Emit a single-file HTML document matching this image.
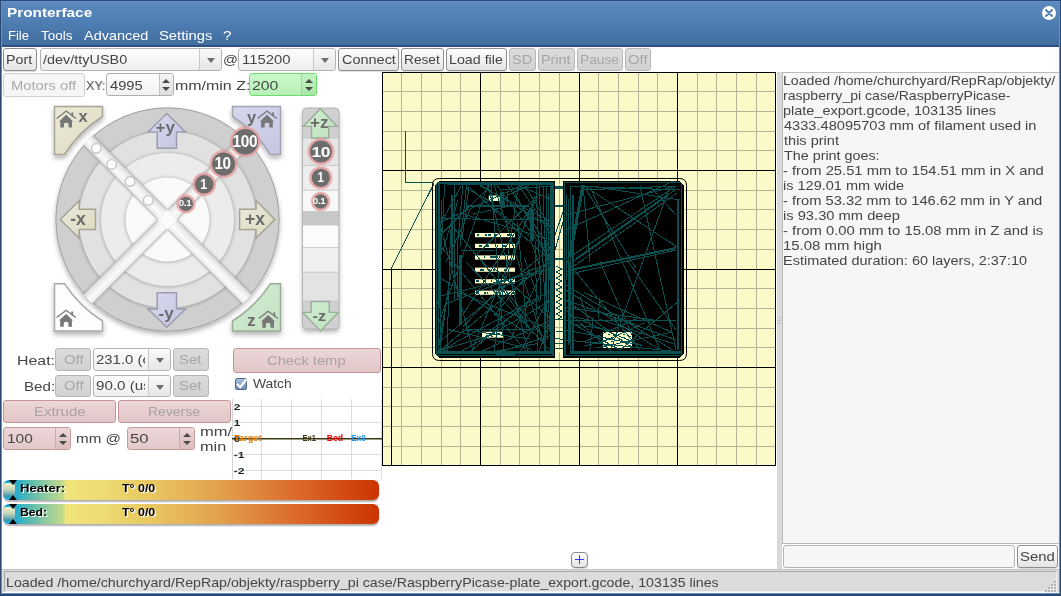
<!DOCTYPE html><html><head><meta charset="utf-8"><style>*{margin:0;padding:0;box-sizing:border-box}
html,body{width:1061px;height:596px;overflow:hidden;background:#fff}
body{position:relative;font-family:"Liberation Sans",sans-serif;font-size:13px;color:#454545;letter-spacing:0}
.a{position:absolute}
.t{position:absolute;white-space:nowrap;line-height:15px;will-change:transform}
svg{will-change:transform}
.frame{left:0;top:0;width:1061px;height:596px;background:#2b4a73}
.frame2{left:1px;top:1px;width:1059px;height:593px;background:#5f90cc}
.title{left:2px;top:2px;width:1057px;height:45px;background:linear-gradient(#5b89be 0px,#5282b6 14px,#4a78ac 28px,#416d9f 43px,#2e5182 43px,#2e5182 45px)}
.content{left:2px;top:47px;width:1057px;height:546px;background:#fff}
.btn{position:absolute;border:1px solid #8e8e8e;border-radius:3px;background:linear-gradient(#fefefe,#e4e4e4);box-shadow:0 1px 0 rgba(0,0,0,.12);text-align:center;white-space:nowrap;color:#3a3a3a}
.dis{border-color:#b6b6b6;background:linear-gradient(#dcdcdc,#d2d2d2);color:#a4a4a4;box-shadow:none}
.pink{border-color:#c49496;background:linear-gradient(#ecd6d7,#e2c6c7);color:#a9a0a0;box-shadow:none}
.combo{position:absolute;border:1px solid #b4b4b4;border-radius:3px;background:linear-gradient(#fdfdfd,#eeeeee);white-space:nowrap;overflow:hidden;color:#3a3a3a}
.combo .dv{position:absolute;top:0;bottom:0;border-left:1px solid #c8c8c8;background:linear-gradient(#fafafa,#e6e6e6)}
.arr{position:absolute;width:0;height:0;border-left:4px solid transparent;border-right:4px solid transparent;border-top:5.5px solid #6c6c6c}
.spin{position:absolute;border:1px solid #b0b0b0;border-radius:3px;background:linear-gradient(#fdfdfd,#f2f2f2);white-space:nowrap;overflow:hidden;color:#3a3a3a}
.spin .dv{position:absolute;top:0;bottom:0;right:0;border-left:1px solid #c4c4c4;background:linear-gradient(#f4f4f4,#dedede)}
.up{position:absolute;width:0;height:0;border-left:4px solid transparent;border-right:4px solid transparent;border-bottom:4.5px solid #4a4a4a}
.dn{position:absolute;width:0;height:0;border-left:4px solid transparent;border-right:4px solid transparent;border-top:4.5px solid #4a4a4a}
svg text{font-family:"Liberation Sans",sans-serif}
.jl{font-weight:bold;fill:#6b6b6b;letter-spacing:0}
.bd{font-weight:bold;fill:#fff;letter-spacing:-0.3px}
.gl{font-weight:bold;font-size:11px;fill:#1c2b2b;letter-spacing:0}
.gt{font-weight:bold;font-size:10px;letter-spacing:0.3px}
.bar{position:absolute;left:3px;width:376px;height:20px;border-radius:6px;background:linear-gradient(90deg,#16a6dc 0px,#2aaecc 14px,#5cbcae 28px,#8ccaa0 42px,#c4da8a 60px,#f0e47a 63px,#eedb72 100px,#e8c660 150px,#e29e4a 220px,#dc6c2c 290px,#cc3300 376px);box-shadow:0 1.5px 1.5px rgba(0,0,0,.3)}
.bar .k{position:absolute;left:0;top:3px;width:12px;height:14px;border-radius:3px;background:linear-gradient(#f6f2c6,#c4d8bc 45%,#3e8ea6)}
.bar .tt{position:absolute;width:0;height:0;border-left:4px solid transparent;border-right:4px solid transparent}
.bar .lb{position:absolute;top:2px;font-weight:bold;font-size:11px;color:#000;letter-spacing:0.3px;text-shadow:1px 1px 0 #fff;line-height:15px}

.mo{background:#f6f6f6;border-color:#d0d0d0;box-shadow:none}
.green{border-color:#6cdc6c;background:linear-gradient(#c8f8c8,#b8f0b8)}
.green .dv{border-color:#90e090;background:linear-gradient(#c4f4c4,#a8e8a8)}
.pk{border-color:#c79a9b;background:linear-gradient(#ecd6d7,#e3c8c9)}
.pk .dv{border-color:#d0aaab;background:linear-gradient(#ecd8d8,#dcbcbd)}
</style></head><body>
<div class="a frame"></div><div class="a frame2"></div>
<div class="a title"></div>
<div class="t" style="left:7.32px;top:5.00px;font-weight:bold;transform:scaleX(1.1786);transform-origin:0 0;color:#fff;">Pronterface</div>
<div class="t" style="left:8.41px;top:27.80px;transform:scaleX(0.9947);transform-origin:0 0;color:#fff;">File</div>
<div class="t" style="left:41.20px;top:27.80px;transform:scaleX(1.0345);transform-origin:0 0;color:#fff;">Tools</div>
<div class="t" style="left:84.40px;top:27.80px;transform:scaleX(1.1107);transform-origin:0 0;color:#fff;">Advanced</div>
<div class="t" style="left:158.66px;top:27.80px;transform:scaleX(1.1356);transform-origin:0 0;color:#fff;">Settings</div>
<div class="t" style="left:222.62px;top:27.80px;transform:scaleX(1.1800);transform-origin:0 0;color:#fff;">?</div>
<div class="a content"></div>
<div class="a" style="left:1041.5px;top:6px;width:14px;height:14px;border-radius:50%;background:#fff"></div><svg class="a" style="left:1041.5px;top:6px" width="14" height="14"><path d="M4,4 L10,10 M10,4 L4,10" stroke="#4d7cb2" stroke-width="1.8" stroke-linecap="round"/></svg>
<div class="btn" style="left:3px;top:48px;width:34px;height:23px;"></div>
<div class="combo" style="left:40px;top:48px;width:182px;height:23px"><div class="dv" style="left:158px;width:23px"></div><div class="arr" style="left:165.5px;top:9px"></div></div>
<div class="t" style="left:42.90px;top:51.80px;transform:scaleX(1.1093);transform-origin:0 0;">/dev/ttyUSB0</div>
<div class="t" style="left:222.76px;top:51.80px;transform:scaleX(1.1400);transform-origin:0 0;">@</div>
<div class="combo" style="left:238px;top:48px;width:98px;height:23px"><div class="dv" style="left:74px;width:23px"></div><div class="arr" style="left:82px;top:9px"></div></div>
<div class="t" style="left:242.46px;top:51.80px;transform:scaleX(1.1425);transform-origin:0 0;">115200</div>
<div class="t" style="left:6.40px;top:51.80px;transform:scaleX(1.0955);transform-origin:0 0;">Port</div>
<div class="btn" style="left:338px;top:48px;width:61px;height:23px;"></div>
<div class="t" style="left:341.69px;top:51.80px;transform:scaleX(1.1130);transform-origin:0 0;">Connect</div>
<div class="btn" style="left:401px;top:48px;width:43px;height:23px;"></div>
<div class="t" style="left:404.35px;top:51.80px;transform:scaleX(1.0531);transform-origin:0 0;">Reset</div>
<div class="btn" style="left:446px;top:48px;width:61px;height:23px;"></div>
<div class="t" style="left:449.30px;top:51.80px;transform:scaleX(1.0957);transform-origin:0 0;">Load file</div>
<div class="btn dis" style="left:509px;top:48px;width:27px;height:23px;"></div>
<div class="t" style="left:512.49px;top:51.80px;transform:scaleX(1.1125);transform-origin:0 0;color:#a6a6a6;">SD</div>
<div class="btn dis" style="left:538px;top:48px;width:37px;height:23px;"></div>
<div class="t" style="left:541.40px;top:51.80px;transform:scaleX(1.1040);transform-origin:0 0;color:#a6a6a6;">Print</div>
<div class="btn dis" style="left:577px;top:48px;width:46px;height:23px;"></div>
<div class="t" style="left:580.34px;top:51.80px;transform:scaleX(1.0571);transform-origin:0 0;color:#a6a6a6;">Pause</div>
<div class="btn dis" style="left:625px;top:48px;width:26px;height:23px;"></div>
<div class="t" style="left:628.25px;top:51.80px;transform:scaleX(1.1467);transform-origin:0 0;color:#a6a6a6;">Off</div>
<div class="btn mo" style="left:3px;top:73px;width:82px;height:24px;"></div>
<div class="t" style="left:11.27px;top:77.80px;transform:scaleX(1.1321);transform-origin:0 0;color:#a9a9a9;">Motors off</div>
<div class="t" style="left:86.14px;top:77.80px;transform:scaleX(0.9647);transform-origin:0 0;">XY:</div>
<div class="spin" style="left:106px;top:73px;width:68px;height:23px"><div class="dv" style="width:14px"><div class="up" style="left:2px;top:4.5px"></div><div class="dn" style="left:2px;top:13px"></div></div></div>
<div class="t" style="left:110.20px;top:77.80px;transform:scaleX(1.1321);transform-origin:0 0;">4995</div>
<div class="t" style="left:174.57px;top:77.80px;transform:scaleX(1.2276);transform-origin:0 0;">mm/min Z:</div>
<div class="spin green" style="left:249px;top:73px;width:68px;height:23px"><div class="dv" style="width:15px"><div class="up" style="left:3px;top:4.5px"></div><div class="dn" style="left:3px;top:13px"></div></div></div>
<div class="t" style="left:252.18px;top:77.80px;transform:scaleX(1.2158);transform-origin:0 0;">200</div>
<svg class="a" style="left:0;top:0" width="1061" height="596" viewBox="0 0 1061 596"><defs>
<filter id="shc" x="-30%" y="-30%" width="160%" height="160%"><feGaussianBlur in="SourceAlpha" stdDeviation="2.5"/><feOffset dx="0" dy="2.5"/><feComponentTransfer><feFuncA type="linear" slope="0.3"/></feComponentTransfer><feMerge><feMergeNode/><feMergeNode in="SourceGraphic"/></feMerge></filter>
<filter id="bl1" x="-30%" y="-30%" width="160%" height="160%"><feGaussianBlur stdDeviation="1.2"/></filter>
<filter id="bl2" x="-50%" y="-50%" width="200%" height="200%"><feGaussianBlur stdDeviation="4"/></filter>
<radialGradient id="rg2" cx="167.5" cy="219.5" r="88.5" gradientUnits="userSpaceOnUse"><stop offset="0" stop-color="#e2e2e2"/><stop offset="1" stop-color="#e0e0e0"/></radialGradient>
<radialGradient id="rg3" cx="167.5" cy="219.5" r="66.5" gradientUnits="userSpaceOnUse"><stop offset="0" stop-color="#eeeeee"/><stop offset="1" stop-color="#ececec"/></radialGradient>
<radialGradient id="rg4" cx="167.5" cy="219.5" r="42" gradientUnits="userSpaceOnUse"><stop offset="0" stop-color="#fcfcfc"/><stop offset="1" stop-color="#f9f9f9"/></radialGradient>
<linearGradient id="gX" x1="0" y1="0" x2="1" y2="1"><stop offset="0" stop-color="#ecead6"/><stop offset="1" stop-color="#dedbc2"/></linearGradient>
<linearGradient id="gY" x1="0" y1="0" x2="1" y2="1"><stop offset="0" stop-color="#d5d6ec"/><stop offset="1" stop-color="#c6c8e2"/></linearGradient>
<linearGradient id="gZ" x1="0" y1="0" x2="1" y2="1"><stop offset="0" stop-color="#d2ecd2"/><stop offset="1" stop-color="#c4e2c4"/></linearGradient>
<linearGradient id="gXa" x1="0" y1="0" x2="1" y2="1"><stop offset="0" stop-color="#eceada"/><stop offset="1" stop-color="#dcd9c0"/></linearGradient>
<linearGradient id="gYa" x1="0" y1="0" x2="1" y2="1"><stop offset="0" stop-color="#d8d9ef"/><stop offset="1" stop-color="#c4c6e0"/></linearGradient>
<linearGradient id="gZa" x1="0" y1="0" x2="1" y2="1"><stop offset="0" stop-color="#d2eed2"/><stop offset="1" stop-color="#bfe0bf"/></linearGradient>
<linearGradient id="stA" gradientUnits="userSpaceOnUse" x1="172.2" y1="214.8" x2="162.8" y2="224.2"><stop offset="0" stop-color="#d6d6d6"/><stop offset="0.3" stop-color="#ededed"/><stop offset="0.6" stop-color="#fafafa"/><stop offset="0.85" stop-color="#f0f0f0"/><stop offset="1" stop-color="#e2e2e2"/></linearGradient>
<linearGradient id="stB" gradientUnits="userSpaceOnUse" x1="162.8" y1="214.8" x2="172.2" y2="224.2"><stop offset="0" stop-color="#d6d6d6"/><stop offset="0.3" stop-color="#ededed"/><stop offset="0.6" stop-color="#fafafa"/><stop offset="0.85" stop-color="#f0f0f0"/><stop offset="1" stop-color="#e2e2e2"/></linearGradient>
<filter id="bl15" x="-30%" y="-30%" width="160%" height="160%"><feGaussianBlur stdDeviation="1.8"/></filter>
</defs>
<g filter="url(#shc)"><circle cx="167.5" cy="219.5" r="112" fill="#cfcfcf"/></g><circle cx="167.5" cy="219.5" r="111.6" fill="#cfcfcf" stroke="#9a9a9a" stroke-width="0.9"/><circle cx="167.5" cy="219.9" r="89.5" fill="#000" fill-opacity="0.2" filter="url(#bl15)"/><circle cx="167.5" cy="219.5" r="88.5" fill="#e1e1e1"/><circle cx="167.5" cy="219.9" r="67.5" fill="#000" fill-opacity="0.2" filter="url(#bl15)"/><circle cx="167.5" cy="219.5" r="66.5" fill="#ececec"/><circle cx="167.5" cy="219.9" r="43.0" fill="#000" fill-opacity="0.2" filter="url(#bl15)"/><circle cx="167.5" cy="219.5" r="42" fill="#fafafa"/><clipPath id="jc"><circle cx="167.5" cy="219.5" r="112.7"/></clipPath><clipPath id="jc2"><circle cx="167.5" cy="219.5" r="112.1"/></clipPath><g clip-path="url(#jc)"><path d="M80.17,144.19 L242.81,306.83 L254.83,294.81 L92.19,132.17Z" fill="#000" opacity="0.08" filter="url(#bl1)"/><path d="M92.19,306.83 L254.83,144.19 L242.81,132.17 L80.17,294.81Z" fill="#000" opacity="0.08" filter="url(#bl1)"/><path d="M74.41,135.81 L251.19,312.59 L260.59,303.19 L83.81,126.41Z" fill="url(#stA)"/><path d="M83.81,312.59 L260.59,135.81 L251.19,126.41 L74.41,303.19Z" fill="url(#stB)"/></g><path d="M74.41,135.81L251.19,312.59M83.81,126.41L260.59,303.19M83.81,312.59L260.59,135.81M74.41,303.19L251.19,126.41" stroke="#a9a9a9" stroke-width="1" fill="none" clip-path="url(#jc2)"/><path d="M157.4954798102189,219.5 L167.5,209.4954798102189 L177.5045201897811,219.5 L167.5,229.5045201897811Z" fill="#f7f7f7"/><circle cx="167.5" cy="219.5" r="8" fill="#fff" opacity="0.8" filter="url(#bl2)"/><circle cx="96.3" cy="148.3" r="4.8" fill="#fdfdfd" stroke="#c6c6c6" stroke-width="1.4"/><circle cx="111.6" cy="164.4" r="4.8" fill="#fdfdfd" stroke="#c6c6c6" stroke-width="1.4"/><circle cx="130" cy="181.5" r="4.8" fill="#fdfdfd" stroke="#c6c6c6" stroke-width="1.4"/><circle cx="148.2" cy="200.4" r="4.8" fill="#fdfdfd" stroke="#c6c6c6" stroke-width="1.4"/><g filter="url(#shc)"><path d="M54.5,106.5 H102.5 V116.5 A122,122 0 0 0 64.5,154.5 H54.5Z" fill="url(#gX)" stroke="#a6a497" stroke-width="1.5"/><path d="M280.5,106.5 H232.5 V116.5 A122,122 0 0 1 270.5,154.5 H280.5Z" fill="url(#gY)" stroke="#a3a3b3" stroke-width="1.5"/><path d="M54.5,331 H102.5 V321 A122,122 0 0 1 64.5,283.7 H54.5Z" fill="#fdfdfd" stroke="#a8a8a8" stroke-width="1.5"/><path d="M280.5,331 H232.5 V321 A122,122 0 0 0 270.5,283.7 H280.5Z" fill="url(#gZ)" stroke="#9aab98" stroke-width="1.5"/></g><g transform="translate(66.2,111.4)"><path d="M-9.5,7 L0,-0.3 L9.8,7" fill="none" stroke="#777" stroke-width="1.3"/><rect x="5.2" y="1" width="1.8" height="4" fill="#777"/><path d="M-7.2,10 L0,3.4 L7,10 H5.8 V16.2 H2.3 V12.2 Q0,10.4 -2.3,12.2 V16.2 H-5.9 V10Z" fill="#777"/></g><g transform="translate(267,111.4)"><path d="M-9.5,7 L0,-0.3 L9.8,7" fill="none" stroke="#777" stroke-width="1.3"/><rect x="5.2" y="1" width="1.8" height="4" fill="#777"/><path d="M-7.2,10 L0,3.4 L7,10 H5.8 V16.2 H2.3 V12.2 Q0,10.4 -2.3,12.2 V16.2 H-5.9 V10Z" fill="#777"/></g><g transform="translate(66.1,310.5)"><path d="M-9.5,7 L0,-0.3 L9.8,7" fill="none" stroke="#777" stroke-width="1.3"/><rect x="5.2" y="1" width="1.8" height="4" fill="#777"/><path d="M-7.2,10 L0,3.4 L7,10 H5.8 V16.2 H2.3 V12.2 Q0,10.4 -2.3,12.2 V16.2 H-5.9 V10Z" fill="#777"/></g><g transform="translate(268.2,311.5)"><path d="M-9.5,7 L0,-0.3 L9.8,7" fill="none" stroke="#777" stroke-width="1.3"/><rect x="5.2" y="1" width="1.8" height="4" fill="#777"/><path d="M-7.2,10 L0,3.4 L7,10 H5.8 V16.2 H2.3 V12.2 Q0,10.4 -2.3,12.2 V16.2 H-5.9 V10Z" fill="#777"/></g><text x="78.5" y="122.3" class="jl" font-size="16.5">x</text><text x="247" y="122.5" class="jl" font-size="16.5">y</text><text x="247.2" y="325.6" class="jl" font-size="16.5">z</text><path d="M166.7,113.5 L185.5,132 H176.5 V148.3 H157.2 V132 H148Z" fill="url(#gYa)" stroke="#9c9cae" stroke-width="1.5"/><path d="M166.7,327.3 L185.5,309 H176.5 V292.8 H157.2 V309 H148Z" fill="url(#gYa)" stroke="#9c9cae" stroke-width="1.5"/><path d="M60.3,219.5 L79.2,200.5 V209.2 H95.5 V229.5 H79.2 V238.3Z" fill="url(#gXa)" stroke="#a5a394" stroke-width="1.5"/><path d="M274.8,219.5 L256,200.5 V209.2 H239.6 V229.5 H256 V238.3Z" fill="url(#gXa)" stroke="#a5a394" stroke-width="1.5"/><text x="155.5" y="133.3" class="jl" font-size="17">+y</text><text x="158.6" y="318.8" class="jl" font-size="17">-y</text><text x="70.2" y="225" class="jl" font-size="17.5">-x</text><text x="245" y="224.8" class="jl" font-size="17.5">+x</text><path d="M238.20,164.00 L236.88,164.79 L238.10,165.73 L236.69,166.35 L237.79,167.43 L236.32,167.88 L237.29,169.08 L235.77,169.36 L236.59,170.67 L235.05,170.76 L235.71,172.16 L234.17,172.07 L234.66,173.53 L233.14,173.26 L233.45,174.77 L231.98,174.33 L232.11,175.86 L230.70,175.25 L230.65,176.79 L229.32,176.01 L229.09,177.53 L227.86,176.60 L227.45,178.08 L226.34,177.01 L225.76,178.44 L224.78,177.25 L224.03,178.59 L223.21,177.29 L222.30,178.54 L221.64,177.15 L220.59,178.29 L220.09,176.83 L218.92,177.83 L218.60,176.32 L217.32,177.18 L217.18,175.65 L215.81,176.35 L215.85,174.81 L214.40,175.34 L214.62,173.81 L213.12,174.17 L213.53,172.68 L212.00,172.86 L212.57,171.43 L211.03,171.42 L211.77,170.07 L210.24,169.89 L211.13,168.63 L209.64,168.26 L210.67,167.12 L209.23,166.58 L210.39,165.57 L209.03,164.86 L210.30,164.00 L209.03,163.14 L210.39,162.43 L209.23,161.42 L210.67,160.88 L209.64,159.74 L211.13,159.37 L210.24,158.11 L211.77,157.93 L211.03,156.58 L212.57,156.57 L212.00,155.14 L213.53,155.32 L213.12,153.83 L214.62,154.19 L214.40,152.66 L215.85,153.19 L215.81,151.65 L217.18,152.35 L217.32,150.82 L218.60,151.68 L218.92,150.17 L220.09,151.17 L220.59,149.71 L221.64,150.85 L222.30,149.46 L223.21,150.71 L224.03,149.41 L224.78,150.75 L225.76,149.56 L226.34,150.99 L227.45,149.92 L227.86,151.40 L229.09,150.47 L229.32,151.99 L230.65,151.21 L230.70,152.75 L232.11,152.14 L231.98,153.67 L233.45,153.23 L233.14,154.74 L234.66,154.47 L234.17,155.93 L235.71,155.84 L235.05,157.24 L236.59,157.33 L235.77,158.64 L237.29,158.92 L236.32,160.12 L237.79,160.57 L236.69,161.65 L238.10,162.27 L236.88,163.21Z" fill="#e39c9e" fill-opacity="0.85"/><circle cx="223.6" cy="164" r="11.5" fill="#6d6d6d"/><text x="214.4" y="168.8" class="bd" font-size="16.06" textLength="16.40" lengthAdjust="spacingAndGlyphs">10</text><path d="M261.20,141.70 L259.88,142.49 L261.11,143.42 L259.71,144.06 L260.83,145.12 L259.37,145.61 L260.37,146.78 L258.86,147.10 L259.73,148.38 L258.20,148.54 L258.92,149.90 L257.38,149.89 L257.96,151.32 L256.43,151.15 L256.84,152.63 L255.34,152.30 L255.59,153.82 L254.14,153.32 L254.22,154.86 L252.83,154.21 L252.75,155.75 L251.43,154.95 L251.19,156.47 L249.96,155.54 L249.55,157.02 L248.44,155.96 L247.87,157.39 L246.88,156.21 L246.16,157.58 L245.30,156.30 L244.44,157.58 L243.72,156.21 L242.73,157.39 L242.16,155.96 L241.05,157.02 L240.64,155.54 L239.41,156.47 L239.17,154.95 L237.85,155.75 L237.77,154.21 L236.38,154.86 L236.46,153.32 L235.01,153.82 L235.26,152.30 L233.76,152.63 L234.17,151.15 L232.64,151.32 L233.22,149.89 L231.68,149.90 L232.40,148.54 L230.87,148.38 L231.74,147.10 L230.23,146.78 L231.23,145.61 L229.77,145.12 L230.89,144.06 L229.49,143.42 L230.72,142.49 L229.40,141.70 L230.72,140.91 L229.49,139.98 L230.89,139.34 L229.77,138.28 L231.23,137.79 L230.23,136.62 L231.74,136.30 L230.87,135.02 L232.40,134.86 L231.68,133.50 L233.22,133.51 L232.64,132.08 L234.17,132.25 L233.76,130.77 L235.26,131.10 L235.01,129.58 L236.46,130.08 L236.38,128.54 L237.77,129.19 L237.85,127.65 L239.17,128.45 L239.41,126.93 L240.64,127.86 L241.05,126.38 L242.16,127.44 L242.73,126.01 L243.72,127.19 L244.44,125.82 L245.30,127.10 L246.16,125.82 L246.88,127.19 L247.87,126.01 L248.44,127.44 L249.55,126.38 L249.96,127.86 L251.19,126.93 L251.43,128.45 L252.75,127.65 L252.83,129.19 L254.22,128.54 L254.14,130.08 L255.59,129.58 L255.34,131.10 L256.84,130.77 L256.43,132.25 L257.96,132.08 L257.38,133.51 L258.92,133.50 L258.20,134.86 L259.73,135.02 L258.86,136.30 L260.37,136.62 L259.37,137.79 L260.83,138.28 L259.71,139.34 L261.11,139.98 L259.88,140.91Z" fill="#e39c9e" fill-opacity="0.85"/><circle cx="245.3" cy="141.7" r="12.8" fill="#6d6d6d"/><text x="232.4" y="146.5" class="bd" font-size="15.92" textLength="24.80" lengthAdjust="spacingAndGlyphs">100</text><path d="M216.60,184.30 L215.27,185.07 L216.48,186.03 L215.06,186.61 L216.12,187.72 L214.63,188.10 L215.53,189.34 L214.00,189.51 L214.72,190.87 L213.18,190.82 L213.70,192.27 L212.18,192.01 L212.50,193.51 L211.03,193.05 L211.13,194.58 L209.75,193.91 L209.64,195.45 L208.36,194.59 L208.03,196.09 L206.89,195.07 L206.35,196.51 L205.36,195.34 L204.63,196.69 L203.81,195.39 L202.90,196.63 L202.27,195.23 L201.20,196.33 L200.77,194.86 L199.55,195.80 L199.33,194.28 L198.00,195.04 L197.99,193.50 L196.57,194.07 L196.77,192.55 L195.28,192.91 L195.70,191.43 L194.17,191.59 L194.79,190.18 L193.25,190.12 L194.06,188.81 L192.55,188.54 L193.53,187.36 L192.07,186.88 L193.21,185.84 L191.83,185.16 L193.10,184.30 L191.83,183.44 L193.21,182.76 L192.07,181.72 L193.53,181.24 L192.55,180.06 L194.06,179.79 L193.25,178.48 L194.79,178.42 L194.17,177.01 L195.70,177.17 L195.28,175.69 L196.77,176.05 L196.57,174.53 L197.99,175.10 L198.00,173.56 L199.33,174.32 L199.55,172.80 L200.77,173.74 L201.20,172.27 L202.27,173.37 L202.90,171.97 L203.81,173.21 L204.63,171.91 L205.36,173.26 L206.35,172.09 L206.89,173.53 L208.03,172.51 L208.36,174.01 L209.64,173.15 L209.75,174.69 L211.13,174.02 L211.03,175.55 L212.50,175.09 L212.18,176.59 L213.70,176.33 L213.18,177.78 L214.72,177.73 L214.00,179.09 L215.53,179.26 L214.63,180.50 L216.12,180.88 L215.06,181.99 L216.48,182.57 L215.27,183.53Z" fill="#e39c9e" fill-opacity="0.85"/><circle cx="204.2" cy="184.3" r="9.3" fill="#6d6d6d"/><text x="200.2" y="188.9" class="bd" font-size="13.97" textLength="6.60" lengthAdjust="spacingAndGlyphs">1</text><path d="M196.10,203.90 L194.77,204.65 L195.95,205.62 L194.51,206.14 L195.52,207.30 L194.01,207.57 L194.80,208.87 L193.27,208.88 L193.84,210.31 L192.33,210.06 L192.64,211.56 L191.19,211.06 L191.25,212.59 L189.91,211.85 L189.70,213.36 L188.51,212.41 L188.05,213.87 L187.03,212.73 L186.33,214.09 L185.52,212.79 L184.60,214.02 L184.02,212.60 L182.91,213.65 L182.58,212.16 L181.31,213.01 L181.23,211.48 L179.83,212.10 L180.02,210.58 L178.54,210.96 L178.98,209.49 L177.45,209.61 L178.13,208.24 L176.61,208.10 L177.51,206.86 L176.03,206.47 L177.13,205.40 L175.74,204.77 L177.00,203.90 L175.74,203.03 L177.13,202.40 L176.03,201.33 L177.51,200.94 L176.61,199.70 L178.13,199.56 L177.45,198.19 L178.98,198.31 L178.54,196.84 L180.02,197.22 L179.83,195.70 L181.23,196.32 L181.31,194.79 L182.58,195.64 L182.91,194.15 L184.02,195.20 L184.60,193.78 L185.52,195.01 L186.33,193.71 L187.03,195.07 L188.05,193.93 L188.51,195.39 L189.70,194.44 L189.91,195.95 L191.25,195.21 L191.19,196.74 L192.64,196.24 L192.33,197.74 L193.84,197.49 L193.27,198.92 L194.80,198.93 L194.01,200.23 L195.52,200.50 L194.51,201.66 L195.95,202.18 L194.77,203.15Z" fill="#e39c9e" fill-opacity="0.85"/><circle cx="185.9" cy="203.9" r="7.1" fill="#6d6d6d"/><text x="178.8" y="205.8" class="bd" font-size="8.94" textLength="12.50" lengthAdjust="spacingAndGlyphs">0.1</text><g filter="url(#shc)"><rect x="302.5" y="108" width="36.5" height="221" rx="4" fill="#d0d0d0"/></g><rect x="303" y="138" width="35.5" height="27.400000000000006" fill="#e5e5e5"/><line x1="303" y1="138" x2="338.5" y2="138" stroke="#c4c4c4" stroke-width="0.8"/><rect x="303" y="165.4" width="35.5" height="24.799999999999983" fill="#eeeeee"/><line x1="303" y1="165.4" x2="338.5" y2="165.4" stroke="#c4c4c4" stroke-width="0.8"/><rect x="303" y="190.2" width="35.5" height="21.400000000000006" fill="#f8f8f8"/><line x1="303" y1="190.2" x2="338.5" y2="190.2" stroke="#c4c4c4" stroke-width="0.8"/><rect x="303" y="211.6" width="35.5" height="13.400000000000006" fill="#c8c8c8"/><line x1="303" y1="211.6" x2="338.5" y2="211.6" stroke="#c4c4c4" stroke-width="0.8"/><rect x="303" y="225" width="35.5" height="22.5" fill="#fbfbfb"/><line x1="303" y1="225" x2="338.5" y2="225" stroke="#c4c4c4" stroke-width="0.8"/><rect x="303" y="247.5" width="35.5" height="24.69999999999999" fill="#f0f0f0"/><line x1="303" y1="247.5" x2="338.5" y2="247.5" stroke="#c4c4c4" stroke-width="0.8"/><rect x="303" y="272.2" width="35.5" height="28.80000000000001" fill="#e3e3e3"/><line x1="303" y1="272.2" x2="338.5" y2="272.2" stroke="#c4c4c4" stroke-width="0.8"/><line x1="303" y1="301" x2="338.5" y2="301" stroke="#c4c4c4" stroke-width="0.8"/><rect x="302.5" y="108" width="36.5" height="221" rx="4" fill="none" stroke="#b4b4b4" stroke-width="1"/><path d="M320.3,108.8 L337.3,126.4 H328.8 V138 H311.5 V126.4 H303.2Z" fill="url(#gZa)" stroke="#9aac9a" stroke-width="1.4"/><path d="M320.5,331 L338.3,312.4 H329.3 V301.5 H311.2 V312.4 H302.8Z" fill="url(#gZa)" stroke="#9aac9a" stroke-width="1.4"/><text x="310" y="127.8" class="jl" font-size="16.6" textLength="18.4" lengthAdjust="spacingAndGlyphs">+z</text><text x="312.5" y="321.3" class="jl" font-size="14.8" textLength="13.6" lengthAdjust="spacingAndGlyphs">-z</text><path d="M335.00,151.50 L333.68,152.28 L334.89,153.22 L333.48,153.83 L334.58,154.91 L333.10,155.35 L334.05,156.56 L332.54,156.81 L333.33,158.12 L331.80,158.19 L332.43,159.59 L330.89,159.46 L331.35,160.93 L329.84,160.62 L330.11,162.13 L328.65,161.63 L328.73,163.17 L327.35,162.50 L327.24,164.03 L325.95,163.20 L325.65,164.70 L324.48,163.72 L324.00,165.18 L322.95,164.05 L322.29,165.44 L321.39,164.19 L320.57,165.49 L319.83,164.15 L318.85,165.33 L318.28,163.91 L317.17,164.97 L316.78,163.48 L315.54,164.39 L315.34,162.87 L314.00,163.62 L313.98,162.09 L312.56,162.67 L312.74,161.14 L311.25,161.55 L311.61,160.06 L310.09,160.28 L310.63,158.84 L309.10,158.87 L309.81,157.51 L308.28,157.35 L309.16,156.09 L307.66,155.74 L308.68,154.60 L307.24,154.07 L308.40,153.06 L307.03,152.36 L308.30,151.50 L307.03,150.64 L308.40,149.94 L307.24,148.93 L308.68,148.40 L307.66,147.26 L309.16,146.91 L308.28,145.65 L309.81,145.49 L309.10,144.13 L310.63,144.16 L310.09,142.72 L311.61,142.94 L311.25,141.45 L312.74,141.86 L312.56,140.33 L313.98,140.91 L314.00,139.38 L315.34,140.13 L315.54,138.61 L316.78,139.52 L317.17,138.03 L318.28,139.09 L318.85,137.67 L319.83,138.85 L320.57,137.51 L321.39,138.81 L322.29,137.56 L322.95,138.95 L324.00,137.82 L324.48,139.28 L325.65,138.30 L325.95,139.80 L327.24,138.97 L327.35,140.50 L328.73,139.83 L328.65,141.37 L330.11,140.87 L329.84,142.38 L331.35,142.07 L330.89,143.54 L332.43,143.41 L331.80,144.81 L333.33,144.88 L332.54,146.19 L334.05,146.44 L333.10,147.65 L334.58,148.09 L333.48,149.17 L334.89,149.78 L333.68,150.72Z" fill="#e39c9e" fill-opacity="0.85"/><circle cx="321" cy="151.5" r="10.9" fill="#6d6d6d"/><text x="311.4" y="156.5" class="bd" font-size="15.08" textLength="18.80" lengthAdjust="spacingAndGlyphs">10</text><path d="M333.00,177.80 L331.67,178.56 L332.88,179.50 L331.46,180.07 L332.53,181.16 L331.04,181.53 L331.95,182.76 L330.42,182.92 L331.15,184.27 L329.62,184.21 L330.15,185.64 L328.64,185.37 L328.96,186.87 L327.51,186.39 L327.62,187.91 L326.25,187.24 L326.15,188.77 L324.88,187.91 L324.57,189.40 L323.44,188.38 L322.92,189.81 L321.94,188.64 L321.23,189.99 L320.42,188.69 L319.52,189.93 L318.91,188.53 L317.85,189.64 L317.43,188.17 L316.23,189.11 L316.02,187.60 L314.70,188.37 L314.70,186.84 L313.29,187.41 L313.51,185.90 L312.02,186.27 L312.45,184.81 L310.93,184.97 L311.56,183.58 L310.03,183.53 L310.84,182.23 L309.34,181.97 L310.32,180.80 L308.87,180.34 L310.01,179.32 L308.63,178.65 L309.90,177.80 L308.63,176.95 L310.01,176.28 L308.87,175.26 L310.32,174.80 L309.34,173.63 L310.84,173.37 L310.03,172.07 L311.56,172.02 L310.93,170.63 L312.45,170.79 L312.02,169.33 L313.51,169.70 L313.29,168.19 L314.70,168.76 L314.70,167.23 L316.02,168.00 L316.23,166.49 L317.43,167.43 L317.85,165.96 L318.91,167.07 L319.52,165.67 L320.42,166.91 L321.23,165.61 L321.94,166.96 L322.92,165.79 L323.44,167.22 L324.57,166.20 L324.88,167.69 L326.15,166.83 L326.25,168.36 L327.62,167.69 L327.51,169.21 L328.96,168.73 L328.64,170.23 L330.15,169.96 L329.62,171.39 L331.15,171.33 L330.42,172.68 L331.95,172.84 L331.04,174.07 L332.53,174.44 L331.46,175.53 L332.88,176.10 L331.67,177.04Z" fill="#e39c9e" fill-opacity="0.85"/><circle cx="320.8" cy="177.8" r="9.1" fill="#6d6d6d"/><text x="317.4" y="182" class="bd" font-size="14.11" textLength="6.10" lengthAdjust="spacingAndGlyphs">1</text><path d="M330.90,201.50 L329.57,202.24 L330.76,203.20 L329.32,203.71 L330.34,204.84 L328.84,205.12 L329.66,206.40 L328.13,206.42 L328.73,207.83 L327.22,207.60 L327.58,209.08 L326.13,208.60 L326.23,210.12 L324.88,209.42 L324.74,210.93 L323.52,210.01 L323.13,211.48 L322.08,210.38 L321.45,211.76 L320.60,210.50 L319.75,211.76 L319.12,210.38 L318.07,211.48 L317.68,210.01 L316.46,210.93 L316.32,209.42 L314.97,210.12 L315.07,208.60 L313.62,209.08 L313.98,207.60 L312.47,207.83 L313.07,206.42 L311.54,206.40 L312.36,205.12 L310.86,204.84 L311.88,203.71 L310.44,203.20 L311.63,202.24 L310.30,201.50 L311.63,200.76 L310.44,199.80 L311.88,199.29 L310.86,198.16 L312.36,197.88 L311.54,196.60 L313.07,196.58 L312.47,195.17 L313.98,195.40 L313.62,193.92 L315.07,194.40 L314.97,192.88 L316.32,193.58 L316.46,192.07 L317.68,192.99 L318.07,191.52 L319.12,192.62 L319.75,191.24 L320.60,192.50 L321.45,191.24 L322.08,192.62 L323.13,191.52 L323.52,192.99 L324.74,192.07 L324.88,193.58 L326.23,192.88 L326.13,194.40 L327.58,193.92 L327.22,195.40 L328.73,195.17 L328.13,196.58 L329.66,196.60 L328.84,197.88 L330.34,198.16 L329.32,199.29 L330.76,199.80 L329.57,200.76Z" fill="#e39c9e" fill-opacity="0.85"/><circle cx="320.6" cy="201.5" r="7.200000000000001" fill="#6d6d6d"/><text x="312.8" y="204.1" class="bd" font-size="9.36" textLength="12.70" lengthAdjust="spacingAndGlyphs">0.1</text><path d="M232.5,399V479M261.5,399V479M291.5,399V479M321.5,399V479M351.5,399V479M381.5,399V479M232,406.5H382M232,422.5H382M232,454.5H382M232,470.5H382" stroke="#dcdcdc" stroke-width="1" fill="none"/><path d="M232.5,399V479" stroke="#d4d4d4" stroke-width="1"/><text x="233.7" y="409.8" font-size="9.2" font-weight="bold" fill="#1b2a2a" textLength="6.6" lengthAdjust="spacingAndGlyphs">2</text><text x="233.7" y="425.8" font-size="9.2" font-weight="bold" fill="#1b2a2a" textLength="6.6" lengthAdjust="spacingAndGlyphs">1</text><text x="233.7" y="441.7" font-size="9.2" font-weight="bold" fill="#1b2a2a" textLength="6.6" lengthAdjust="spacingAndGlyphs">0</text><text x="233.7" y="457.8" font-size="9.2" font-weight="bold" fill="#1b2a2a" textLength="10.8" lengthAdjust="spacingAndGlyphs">-1</text><text x="233.7" y="473.8" font-size="9.2" font-weight="bold" fill="#1b2a2a" textLength="10.8" lengthAdjust="spacingAndGlyphs">-2</text><path d="M232,438.7H382" stroke="#3b3810" stroke-width="1.5"/><text x="233.9" y="441.3" font-size="8.6" font-weight="bold" fill="#e87a00" textLength="27.7" lengthAdjust="spacingAndGlyphs">Target</text><text x="302.5" y="441.3" font-size="8.6" font-weight="bold" fill="#3b3810" textLength="13.5" lengthAdjust="spacingAndGlyphs">Ex1</text><text x="326.7" y="441.3" font-size="8.6" font-weight="bold" fill="#ee0000" textLength="16.3" lengthAdjust="spacingAndGlyphs">Bed</text><text x="350.9" y="441.3" font-size="8.6" font-weight="bold" fill="#2196f0" textLength="15.1" lengthAdjust="spacingAndGlyphs">Ex0</text><rect x="382" y="72" width="394" height="394" fill="#fafac8"/><path d="M401.5,72V466M421.5,72V466M441.5,72V466M460.5,72V466M500.5,72V466M519.5,72V466M539.5,72V466M559.5,72V466M598.5,72V466M618.5,72V466M638.5,72V466M657.5,72V466M697.5,72V466M716.5,72V466M736.5,72V466M756.5,72V466M382,446.5H776M382,426.5H776M382,406.5H776M382,387.5H776M382,347.5H776M382,328.5H776M382,308.5H776M382,288.5H776M382,249.5H776M382,229.5H776M382,209.5H776M382,190.5H776M382,150.5H776M382,131.5H776M382,111.5H776M382,91.5H776" stroke="#b4b496" stroke-width="1" fill="none"/><path d="M382.5,72V466M480.5,72V466M579.5,72V466M677.5,72V466M775.5,72V466M382,465.5H776M382,367.5H776M382,269.5H776M382,170.5H776M382,72.5H776" stroke="#000" stroke-width="1" fill="none"/><g shape-rendering="crispEdges">
<path d="M405.5,131 V182.5 H433" fill="none" stroke="#0a5050" stroke-width="1"/>
<line x1="434.0" y1="183.5" x2="391.5" y2="268.0" stroke="#0a5050" stroke-width="1"/>
<line x1="391.5" y1="268.0" x2="391.5" y2="465.0" stroke="#000" stroke-width="1"/>
</g>
<path d="M432.5,185 Q432.5,178.5 439.5,178.5 H679.5 Q686.5,178.5 686.5,185.5 V353.5 Q686.5,360.5 679.5,360.5 H439.5 Q432.5,360.5 432.5,353.5 Z" fill="none" stroke="#000" stroke-width="1"/>
<path d="M435,185 L439,181 H555 V358 H439 L435,354 Z" fill="#000" shape-rendering="crispEdges"/>
<path d="M563,181 H679 L684,186 V353 L679,358 H563 Z" fill="#000" shape-rendering="crispEdges"/>
<rect x="488.8" y="195.5" width="11" height="5.5" fill="#fafac8"/>
<rect x="475" y="233" width="40" height="4.2" fill="#fafac8"/>
<rect x="475" y="243.8" width="40" height="4.2" fill="#fafac8"/>
<rect x="475" y="255.4" width="40" height="4.2" fill="#fafac8"/>
<rect x="475" y="267.6" width="40" height="4.2" fill="#fafac8"/>
<rect x="475" y="279.2" width="40" height="4.2" fill="#fafac8"/>
<rect x="475" y="290.6" width="40" height="4.2" fill="#fafac8"/>
<rect x="482" y="331.7" width="21" height="6" fill="#fafac8"/>
<rect x="603" y="332" width="29" height="16" fill="#fafac8"/>
<rect x="555" y="184" width="7.5" height="168" fill="#fafac8"/>
<clipPath id="gclip"><path d="M435,185 L439,181 H679 L684,186 V353 L679,358 H439 L435,354 Z"/></clipPath>
<g shape-rendering="crispEdges" clip-path="url(#gclip)">
<path d="M559.5,185V350M554.8,249.5H563M554.8,288.5H563M554.8,327.5H563" stroke="#b4b496" stroke-width="1"/>
<line x1="554.8" y1="187.8" x2="563.0" y2="187.8" stroke="#0a5050" stroke-width="3"/>
<line x1="554.8" y1="206.0" x2="563.0" y2="206.0" stroke="#0a5050" stroke-width="2"/>
<line x1="554.8" y1="258.7" x2="563.0" y2="258.7" stroke="#0a5050" stroke-width="2"/>
<line x1="555.0" y1="235.0" x2="563.0" y2="212.0" stroke="#0a5050" stroke-width="1"/>
<line x1="555.0" y1="250.0" x2="563.0" y2="222.0" stroke="#0a5050" stroke-width="1"/>
<line x1="556.0" y1="266.0" x2="562.0" y2="269.0" stroke="#0a5050" stroke-width="1"/>
<line x1="562.0" y1="269.0" x2="556.0" y2="272.0" stroke="#0a5050" stroke-width="1"/>
<line x1="556.0" y1="272.0" x2="562.0" y2="275.0" stroke="#0a5050" stroke-width="1"/>
<line x1="562.0" y1="275.0" x2="556.0" y2="278.0" stroke="#0a5050" stroke-width="1"/>
<line x1="556.0" y1="278.0" x2="562.0" y2="281.0" stroke="#0a5050" stroke-width="1"/>
<line x1="562.0" y1="281.0" x2="556.0" y2="284.0" stroke="#0a5050" stroke-width="1"/>
<line x1="556.0" y1="284.0" x2="562.0" y2="287.0" stroke="#0a5050" stroke-width="1"/>
<line x1="562.0" y1="287.0" x2="556.0" y2="290.0" stroke="#0a5050" stroke-width="1"/>
<line x1="556.0" y1="290.0" x2="562.0" y2="293.0" stroke="#0a5050" stroke-width="1"/>
<line x1="562.0" y1="293.0" x2="556.0" y2="296.0" stroke="#0a5050" stroke-width="1"/>
<line x1="556.0" y1="296.0" x2="562.0" y2="299.0" stroke="#0a5050" stroke-width="1"/>
<line x1="562.0" y1="299.0" x2="556.0" y2="302.0" stroke="#0a5050" stroke-width="1"/>
<line x1="556.0" y1="302.0" x2="562.0" y2="305.0" stroke="#0a5050" stroke-width="1"/>
<line x1="562.0" y1="305.0" x2="556.0" y2="308.0" stroke="#0a5050" stroke-width="1"/>
<line x1="556.0" y1="308.0" x2="562.0" y2="311.0" stroke="#0a5050" stroke-width="1"/>
<line x1="562.0" y1="311.0" x2="556.0" y2="314.0" stroke="#0a5050" stroke-width="1"/>
<line x1="556.0" y1="314.0" x2="562.0" y2="317.0" stroke="#0a5050" stroke-width="1"/>
<line x1="562.0" y1="317.0" x2="556.0" y2="320.0" stroke="#0a5050" stroke-width="1"/>
<line x1="555.0" y1="320.0" x2="563.0" y2="319.8" stroke="#0a5050" stroke-width="1"/>
<line x1="555.0" y1="331.0" x2="563.0" y2="331.2" stroke="#0a5050" stroke-width="1"/>
<line x1="555.0" y1="338.0" x2="563.0" y2="339.7" stroke="#0a5050" stroke-width="1"/>
<line x1="555.0" y1="344.0" x2="563.0" y2="343.9" stroke="#0a5050" stroke-width="1"/>
<line x1="555.0" y1="348.0" x2="563.0" y2="348.0" stroke="#0a5050" stroke-width="1"/>
<line x1="552.5" y1="182.0" x2="552.5" y2="356.0" stroke="#0a5050" stroke-width="1"/>
<line x1="546.5" y1="193.0" x2="545.9" y2="342.8" stroke="#0a5050" stroke-width="1"/>
<line x1="548.5" y1="193.7" x2="549.1" y2="332.4" stroke="#0a5050" stroke-width="1"/>
<line x1="553.5" y1="188.2" x2="552.7" y2="350.2" stroke="#0a5050" stroke-width="1"/>
<line x1="566.5" y1="194.8" x2="565.6" y2="354.6" stroke="#0a5050" stroke-width="1"/>
<line x1="568.5" y1="199.4" x2="568.8" y2="345.4" stroke="#0a5050" stroke-width="1"/>
<line x1="570.5" y1="185.7" x2="569.5" y2="343.2" stroke="#0a5050" stroke-width="1"/>
<rect x="478" y="234" width="1" height="2" fill="#0a5050"/>
<rect x="509" y="234" width="3" height="2" fill="#0a5050"/>
<rect x="477" y="234" width="2" height="2" fill="#0a5050"/>
<rect x="488" y="234" width="3" height="2" fill="#0a5050"/>
<rect x="507" y="234" width="3" height="2" fill="#0a5050"/>
<rect x="485" y="234" width="2" height="2" fill="#0a5050"/>
<rect x="494" y="234" width="3" height="2" fill="#0a5050"/>
<rect x="479" y="245" width="3" height="2" fill="#0a5050"/>
<rect x="486" y="245" width="3" height="2" fill="#0a5050"/>
<rect x="513" y="245" width="1" height="2" fill="#0a5050"/>
<rect x="502" y="245" width="2" height="2" fill="#0a5050"/>
<rect x="504" y="245" width="3" height="2" fill="#0a5050"/>
<rect x="487" y="245" width="1" height="2" fill="#0a5050"/>
<rect x="497" y="245" width="1" height="2" fill="#0a5050"/>
<rect x="491" y="256" width="2" height="2" fill="#0a5050"/>
<rect x="490" y="256" width="1" height="2" fill="#0a5050"/>
<rect x="507" y="256" width="1" height="2" fill="#0a5050"/>
<rect x="484" y="256" width="1" height="2" fill="#0a5050"/>
<rect x="493" y="256" width="3" height="2" fill="#0a5050"/>
<rect x="491" y="256" width="1" height="2" fill="#0a5050"/>
<rect x="497" y="256" width="1" height="2" fill="#0a5050"/>
<rect x="505" y="269" width="2" height="2" fill="#0a5050"/>
<rect x="488" y="269" width="2" height="2" fill="#0a5050"/>
<rect x="488" y="269" width="2" height="2" fill="#0a5050"/>
<rect x="504" y="269" width="1" height="2" fill="#0a5050"/>
<rect x="481" y="269" width="3" height="2" fill="#0a5050"/>
<rect x="480" y="269" width="1" height="2" fill="#0a5050"/>
<rect x="493" y="269" width="2" height="2" fill="#0a5050"/>
<rect x="483" y="280" width="3" height="2" fill="#0a5050"/>
<rect x="483" y="280" width="3" height="2" fill="#0a5050"/>
<rect x="483" y="280" width="3" height="2" fill="#0a5050"/>
<rect x="504" y="280" width="2" height="2" fill="#0a5050"/>
<rect x="500" y="280" width="1" height="2" fill="#0a5050"/>
<rect x="491" y="280" width="1" height="2" fill="#0a5050"/>
<rect x="476" y="280" width="3" height="2" fill="#0a5050"/>
<rect x="487" y="292" width="1" height="2" fill="#0a5050"/>
<rect x="484" y="292" width="2" height="2" fill="#0a5050"/>
<rect x="513" y="292" width="3" height="2" fill="#0a5050"/>
<rect x="500" y="292" width="1" height="2" fill="#0a5050"/>
<rect x="478" y="292" width="1" height="2" fill="#0a5050"/>
<rect x="484" y="292" width="2" height="2" fill="#0a5050"/>
<rect x="476" y="292" width="3" height="2" fill="#0a5050"/>
<rect x="489" y="333" width="2" height="1" fill="#0a5050"/>
<rect x="484" y="332" width="2" height="1" fill="#0a5050"/>
<rect x="493" y="333" width="2" height="1" fill="#0a5050"/>
<rect x="493" y="333" width="2" height="1" fill="#0a5050"/>
<rect x="491" y="336" width="2" height="1" fill="#0a5050"/>
<rect x="491" y="334" width="2" height="1" fill="#0a5050"/>
<rect x="498" y="333" width="2" height="1" fill="#0a5050"/>
<rect x="486" y="336" width="2" height="1" fill="#0a5050"/>
<rect x="497" y="333" width="2" height="1" fill="#0a5050"/>
<rect x="486" y="335" width="2" height="1" fill="#0a5050"/>
<rect x="629" y="336" width="2" height="1" fill="#0a5050"/>
<rect x="629" y="345" width="2" height="1" fill="#0a5050"/>
<rect x="620" y="339" width="2" height="1" fill="#0a5050"/>
<rect x="608" y="334" width="2" height="1" fill="#0a5050"/>
<rect x="629" y="336" width="2" height="1" fill="#0a5050"/>
<rect x="623" y="337" width="2" height="1" fill="#0a5050"/>
<rect x="626" y="341" width="2" height="1" fill="#0a5050"/>
<rect x="613" y="335" width="2" height="1" fill="#0a5050"/>
<rect x="623" y="334" width="2" height="1" fill="#0a5050"/>
<rect x="611" y="341" width="2" height="1" fill="#0a5050"/>
<rect x="626" y="342" width="2" height="1" fill="#0a5050"/>
<rect x="613" y="346" width="2" height="1" fill="#0a5050"/>
<line x1="501.6" y1="192.0" x2="500.1" y2="206.0" stroke="#0a5050" stroke-width="1"/>
<line x1="502.2" y1="192.0" x2="503.6" y2="206.0" stroke="#0a5050" stroke-width="1"/>
<line x1="500.5" y1="192.0" x2="501.4" y2="206.0" stroke="#0a5050" stroke-width="1"/>
<line x1="503.0" y1="192.0" x2="504.6" y2="206.0" stroke="#0a5050" stroke-width="1"/>
<line x1="501.1" y1="192.0" x2="502.9" y2="206.0" stroke="#0a5050" stroke-width="1"/>
<line x1="507.1" y1="192.0" x2="507.8" y2="206.0" stroke="#0a5050" stroke-width="1"/>
<rect x="436.5" y="182.5" width="117" height="173" fill="none" stroke="#0a5050" stroke-width="1"/>
<rect x="564.5" y="182.5" width="117" height="173" fill="none" stroke="#0a5050" stroke-width="1"/>
<line x1="436.5" y1="184.0" x2="436.5" y2="352.0" stroke="#0a5050" stroke-width="1"/>
<line x1="439.5" y1="184.0" x2="440.5" y2="350.0" stroke="#0a5050" stroke-width="1"/>
<line x1="441.5" y1="200.0" x2="438.0" y2="352.0" stroke="#0a5050" stroke-width="1"/>
<line x1="450.5" y1="230.0" x2="447.0" y2="352.0" stroke="#0a5050" stroke-width="1"/>
<line x1="451.6" y1="195.0" x2="451.6" y2="268.0" stroke="#0a5050" stroke-width="2"/>
<line x1="454.6" y1="185.0" x2="454.6" y2="300.0" stroke="#0a5050" stroke-width="1"/>
<line x1="452.0" y1="268.0" x2="438.0" y2="351.0" stroke="#0a5050" stroke-width="1"/>
<line x1="448.0" y1="290.0" x2="440.0" y2="350.0" stroke="#0a5050" stroke-width="1"/>
<line x1="466.7" y1="184.0" x2="459.9" y2="247.4" stroke="#0a5050" stroke-width="1"/>
<line x1="463.0" y1="184.0" x2="457.0" y2="250.0" stroke="#0a5050" stroke-width="1"/>
<line x1="469.0" y1="186.0" x2="462.0" y2="240.0" stroke="#0a5050" stroke-width="1"/>
<line x1="461.4" y1="185.5" x2="441.0" y2="223.0" stroke="#0a5050" stroke-width="1"/>
<line x1="458.0" y1="200.0" x2="443.0" y2="250.0" stroke="#0a5050" stroke-width="1"/>
<line x1="470.0" y1="210.0" x2="446.0" y2="262.0" stroke="#0a5050" stroke-width="1"/>
<line x1="460.5" y1="255.0" x2="460.5" y2="325.0" stroke="#0a5050" stroke-width="3"/>
<line x1="457.0" y1="240.0" x2="457.0" y2="300.0" stroke="#0a5050" stroke-width="1"/>
<line x1="466.0" y1="205.9" x2="529.0" y2="205.9" stroke="#0a5050" stroke-width="2"/>
<line x1="466.7" y1="188.6" x2="494.0" y2="203.6" stroke="#0a5050" stroke-width="1"/>
<line x1="463.7" y1="214.2" x2="552.0" y2="240.0" stroke="#0a5050" stroke-width="1"/>
<line x1="472.7" y1="214.2" x2="510.0" y2="206.0" stroke="#0a5050" stroke-width="1"/>
<line x1="460.7" y1="250.4" x2="494.0" y2="250.4" stroke="#0a5050" stroke-width="1"/>
<line x1="494.0" y1="208.0" x2="528.7" y2="235.3" stroke="#0a5050" stroke-width="1"/>
<line x1="507.6" y1="195.3" x2="529.4" y2="184.8" stroke="#0a5050" stroke-width="1"/>
<line x1="500.0" y1="190.0" x2="552.0" y2="186.0" stroke="#0a5050" stroke-width="1"/>
<line x1="470.0" y1="188.0" x2="552.0" y2="262.0" stroke="#0a5050" stroke-width="1"/>
<line x1="480.0" y1="186.0" x2="552.0" y2="222.0" stroke="#0a5050" stroke-width="1"/>
<line x1="520.0" y1="186.0" x2="552.0" y2="200.0" stroke="#0a5050" stroke-width="1"/>
<line x1="531.5" y1="209.0" x2="531.5" y2="241.0" stroke="#0a5050" stroke-width="4"/>
<line x1="536.0" y1="185.0" x2="541.0" y2="300.0" stroke="#0a5050" stroke-width="1"/>
<line x1="539.0" y1="185.0" x2="546.0" y2="320.0" stroke="#0a5050" stroke-width="1"/>
<line x1="543.0" y1="186.0" x2="548.0" y2="340.0" stroke="#0a5050" stroke-width="1"/>
<line x1="547.0" y1="186.0" x2="544.0" y2="352.0" stroke="#0a5050" stroke-width="1"/>
<line x1="535.0" y1="240.0" x2="538.0" y2="352.0" stroke="#0a5050" stroke-width="1"/>
<line x1="465.0" y1="329.7" x2="540.0" y2="329.7" stroke="#0a5050" stroke-width="1"/>
<line x1="463.0" y1="326.6" x2="494.0" y2="294.2" stroke="#0a5050" stroke-width="1"/>
<line x1="459.8" y1="292.7" x2="552.0" y2="330.0" stroke="#0a5050" stroke-width="1"/>
<line x1="447.4" y1="303.5" x2="552.0" y2="262.0" stroke="#0a5050" stroke-width="1"/>
<line x1="438.0" y1="351.0" x2="494.0" y2="334.4" stroke="#0a5050" stroke-width="1"/>
<line x1="438.0" y1="352.0" x2="540.0" y2="268.0" stroke="#0a5050" stroke-width="1"/>
<line x1="438.0" y1="352.0" x2="552.0" y2="290.0" stroke="#0a5050" stroke-width="1"/>
<line x1="494.0" y1="315.8" x2="532.6" y2="268.0" stroke="#0a5050" stroke-width="1"/>
<line x1="460.0" y1="352.0" x2="552.0" y2="300.0" stroke="#0a5050" stroke-width="1"/>
<line x1="480.0" y1="352.0" x2="552.0" y2="320.0" stroke="#0a5050" stroke-width="1"/>
<line x1="500.0" y1="352.0" x2="552.0" y2="335.0" stroke="#0a5050" stroke-width="1"/>
<line x1="494.0" y1="290.0" x2="552.0" y2="268.0" stroke="#0a5050" stroke-width="1"/>
<line x1="470.0" y1="352.0" x2="530.0" y2="300.0" stroke="#0a5050" stroke-width="1"/>
<line x1="520.0" y1="352.0" x2="548.0" y2="300.0" stroke="#0a5050" stroke-width="1"/>
<line x1="510.0" y1="340.0" x2="552.0" y2="250.0" stroke="#0a5050" stroke-width="1"/>
<line x1="466.0" y1="262.0" x2="552.0" y2="352.0" stroke="#0a5050" stroke-width="1"/>
<line x1="494.0" y1="268.0" x2="552.0" y2="320.0" stroke="#0a5050" stroke-width="1"/>
<line x1="437.0" y1="352.5" x2="552.0" y2="352.5" stroke="#0a5050" stroke-width="3"/>
<line x1="437.0" y1="183.3" x2="552.0" y2="183.3" stroke="#0a5050" stroke-width="2"/>
<line x1="550.6" y1="183.0" x2="550.6" y2="353.0" stroke="#0a5050" stroke-width="2"/>
<line x1="504.4" y1="354.0" x2="491.1" y2="184.0" stroke="#0a5050" stroke-width="1"/>
<line x1="438.0" y1="304.0" x2="438.5" y2="184.0" stroke="#0a5050" stroke-width="1"/>
<line x1="491.9" y1="184.0" x2="438.0" y2="237.5" stroke="#0a5050" stroke-width="1"/>
<line x1="444.7" y1="184.0" x2="438.0" y2="310.2" stroke="#0a5050" stroke-width="1"/>
<line x1="528.0" y1="354.0" x2="438.0" y2="243.2" stroke="#0a5050" stroke-width="1"/>
<line x1="550.0" y1="338.7" x2="550.0" y2="346.3" stroke="#0a5050" stroke-width="1"/>
<line x1="536.2" y1="184.0" x2="508.5" y2="184.0" stroke="#0a5050" stroke-width="1"/>
<line x1="550.0" y1="248.0" x2="506.6" y2="184.0" stroke="#0a5050" stroke-width="1"/>
<line x1="446.5" y1="184.0" x2="551.2" y2="184.0" stroke="#0a5050" stroke-width="1"/>
<line x1="550.0" y1="308.7" x2="550.0" y2="344.6" stroke="#0a5050" stroke-width="1"/>
<line x1="550.0" y1="258.7" x2="496.2" y2="184.0" stroke="#0a5050" stroke-width="1"/>
<line x1="472.0" y1="184.0" x2="491.8" y2="184.0" stroke="#0a5050" stroke-width="1"/>
<line x1="547.1" y1="354.0" x2="493.7" y2="184.0" stroke="#0a5050" stroke-width="1"/>
<line x1="550.0" y1="226.5" x2="478.7" y2="184.0" stroke="#0a5050" stroke-width="1"/>
<line x1="514.7" y1="354.0" x2="496.1" y2="354.0" stroke="#0a5050" stroke-width="1"/>
<line x1="438.0" y1="296.8" x2="550.0" y2="268.7" stroke="#0a5050" stroke-width="1"/>
<line x1="473.9" y1="354.0" x2="438.0" y2="216.5" stroke="#0a5050" stroke-width="1"/>
<line x1="550.0" y1="321.8" x2="538.1" y2="354.0" stroke="#0a5050" stroke-width="1"/>
<line x1="550.0" y1="220.2" x2="438.0" y2="218.5" stroke="#0a5050" stroke-width="1"/>
<line x1="493.6" y1="354.0" x2="518.5" y2="184.0" stroke="#0a5050" stroke-width="1"/>
<line x1="438.0" y1="325.0" x2="488.3" y2="184.0" stroke="#0a5050" stroke-width="1"/>
<line x1="438.0" y1="343.1" x2="550.0" y2="248.6" stroke="#0a5050" stroke-width="1"/>
<line x1="550.0" y1="299.0" x2="550.0" y2="237.7" stroke="#0a5050" stroke-width="1"/>
<line x1="468.3" y1="184.0" x2="514.7" y2="184.0" stroke="#0a5050" stroke-width="1"/>
<line x1="438.0" y1="281.3" x2="438.0" y2="295.0" stroke="#0a5050" stroke-width="1"/>
<line x1="510.4" y1="184.0" x2="550.0" y2="261.1" stroke="#0a5050" stroke-width="1"/>
<line x1="525.2" y1="184.0" x2="438.0" y2="223.3" stroke="#0a5050" stroke-width="1"/>
<line x1="528.4" y1="354.0" x2="487.8" y2="184.0" stroke="#0a5050" stroke-width="1"/>
<line x1="438.0" y1="348.8" x2="459.1" y2="354.0" stroke="#0a5050" stroke-width="1"/>
<line x1="550.0" y1="226.6" x2="523.6" y2="184.0" stroke="#0a5050" stroke-width="1"/>
<line x1="538.0" y1="195.9" x2="463.0" y2="314.8" stroke="#0a5050" stroke-width="1"/>
<line x1="538.2" y1="343.4" x2="494.5" y2="351.5" stroke="#0a5050" stroke-width="1"/>
<line x1="526.8" y1="327.5" x2="517.5" y2="221.6" stroke="#0a5050" stroke-width="1"/>
<line x1="534.3" y1="334.6" x2="481.6" y2="259.7" stroke="#0a5050" stroke-width="1"/>
<line x1="527.9" y1="333.7" x2="437.8" y2="276.4" stroke="#0a5050" stroke-width="1"/>
<line x1="541.6" y1="271.4" x2="531.2" y2="241.6" stroke="#0a5050" stroke-width="1"/>
<line x1="531.8" y1="349.1" x2="448.4" y2="329.5" stroke="#0a5050" stroke-width="1"/>
<line x1="545.9" y1="339.7" x2="451.2" y2="224.7" stroke="#0a5050" stroke-width="1"/>
<line x1="533.7" y1="204.2" x2="472.6" y2="348.1" stroke="#0a5050" stroke-width="1"/>
<line x1="550.0" y1="232.4" x2="519.6" y2="186.6" stroke="#0a5050" stroke-width="1"/>
<line x1="537.1" y1="196.0" x2="476.3" y2="254.8" stroke="#0a5050" stroke-width="1"/>
<line x1="530.3" y1="339.0" x2="462.1" y2="329.7" stroke="#0a5050" stroke-width="1"/>
<line x1="534.9" y1="195.7" x2="498.3" y2="299.3" stroke="#0a5050" stroke-width="1"/>
<line x1="549.5" y1="266.2" x2="552.0" y2="335.3" stroke="#0a5050" stroke-width="1"/>
<line x1="537.5" y1="299.8" x2="487.6" y2="331.8" stroke="#0a5050" stroke-width="1"/>
<line x1="539.4" y1="301.6" x2="524.2" y2="257.8" stroke="#0a5050" stroke-width="1"/>
<line x1="583.0" y1="185.0" x2="570.0" y2="257.0" stroke="#0a5050" stroke-width="3"/>
<line x1="570.0" y1="257.0" x2="676.0" y2="186.0" stroke="#0a5050" stroke-width="1"/>
<line x1="572.0" y1="262.0" x2="675.0" y2="190.0" stroke="#0a5050" stroke-width="1"/>
<line x1="574.0" y1="266.0" x2="677.0" y2="193.0" stroke="#0a5050" stroke-width="1"/>
<line x1="576.0" y1="259.0" x2="668.0" y2="195.0" stroke="#0a5050" stroke-width="2"/>
<line x1="583.0" y1="185.0" x2="677.0" y2="247.0" stroke="#0a5050" stroke-width="1"/>
<line x1="583.0" y1="185.0" x2="636.0" y2="268.0" stroke="#0a5050" stroke-width="1"/>
<line x1="590.0" y1="186.0" x2="660.0" y2="350.0" stroke="#0a5050" stroke-width="1"/>
<line x1="570.0" y1="270.0" x2="676.0" y2="248.0" stroke="#0a5050" stroke-width="2"/>
<line x1="678.0" y1="200.0" x2="678.0" y2="350.0" stroke="#0a5050" stroke-width="2"/>
<line x1="566.0" y1="300.0" x2="676.0" y2="340.0" stroke="#0a5050" stroke-width="1"/>
<line x1="566.0" y1="290.0" x2="660.0" y2="350.0" stroke="#0a5050" stroke-width="1"/>
<line x1="600.0" y1="262.0" x2="632.0" y2="335.0" stroke="#0a5050" stroke-width="1"/>
<line x1="627.0" y1="260.0" x2="676.0" y2="330.0" stroke="#0a5050" stroke-width="1"/>
<line x1="566.0" y1="215.0" x2="676.0" y2="186.0" stroke="#0a5050" stroke-width="1"/>
<line x1="570.0" y1="186.0" x2="680.0" y2="190.0" stroke="#0a5050" stroke-width="1"/>
<line x1="566.0" y1="320.0" x2="620.0" y2="350.0" stroke="#0a5050" stroke-width="1"/>
<line x1="566.0" y1="330.0" x2="640.0" y2="345.0" stroke="#0a5050" stroke-width="1"/>
<line x1="566.0" y1="340.0" x2="680.0" y2="352.0" stroke="#0a5050" stroke-width="1"/>
<line x1="640.0" y1="186.0" x2="676.0" y2="350.0" stroke="#0a5050" stroke-width="1"/>
<line x1="620.0" y1="350.0" x2="680.0" y2="300.0" stroke="#0a5050" stroke-width="1"/>
<line x1="583.0" y1="185.0" x2="590.0" y2="262.0" stroke="#0a5050" stroke-width="1"/>
<line x1="570.0" y1="352.0" x2="682.0" y2="352.0" stroke="#0a5050" stroke-width="3"/>
<line x1="650.0" y1="186.0" x2="676.0" y2="215.0" stroke="#0a5050" stroke-width="1"/>
<line x1="566.0" y1="310.0" x2="610.0" y2="350.0" stroke="#0a5050" stroke-width="1"/>
<line x1="590.0" y1="186.0" x2="680.0" y2="200.0" stroke="#0a5050" stroke-width="1"/>
<line x1="566.0" y1="275.0" x2="676.0" y2="250.0" stroke="#0a5050" stroke-width="1"/>
<line x1="566.0" y1="260.0" x2="640.0" y2="350.0" stroke="#0a5050" stroke-width="1"/>
<line x1="573.0" y1="195.0" x2="573.0" y2="352.0" stroke="#0a5050" stroke-width="2"/>
<line x1="570.0" y1="190.0" x2="570.0" y2="352.0" stroke="#0a5050" stroke-width="1"/>
<line x1="566.0" y1="230.0" x2="676.0" y2="180.0" stroke="#0a5050" stroke-width="1"/>
<line x1="582.0" y1="190.0" x2="676.0" y2="186.0" stroke="#0a5050" stroke-width="1"/>
<line x1="670.0" y1="186.0" x2="610.0" y2="352.0" stroke="#0a5050" stroke-width="1"/>
<line x1="566.0" y1="285.0" x2="676.0" y2="352.0" stroke="#0a5050" stroke-width="1"/>
<line x1="566.0" y1="300.0" x2="632.0" y2="348.0" stroke="#0a5050" stroke-width="1"/>
<line x1="566.0" y1="320.0" x2="676.0" y2="320.0" stroke="#0a5050" stroke-width="1"/>
<line x1="585.0" y1="341.5" x2="640.5" y2="316.9" stroke="#0a5050" stroke-width="1"/>
<line x1="583.5" y1="346.2" x2="613.1" y2="338.2" stroke="#0a5050" stroke-width="1"/>
<line x1="598.5" y1="343.9" x2="644.8" y2="322.8" stroke="#0a5050" stroke-width="1"/>
<line x1="570.8" y1="323.8" x2="614.6" y2="330.9" stroke="#0a5050" stroke-width="1"/>
<line x1="580.0" y1="297.1" x2="590.4" y2="325.8" stroke="#0a5050" stroke-width="1"/>
<line x1="584.3" y1="292.7" x2="672.6" y2="332.8" stroke="#0a5050" stroke-width="1"/>
<line x1="599.6" y1="297.6" x2="598.4" y2="317.0" stroke="#0a5050" stroke-width="1"/>
<line x1="597.6" y1="318.5" x2="672.9" y2="343.6" stroke="#0a5050" stroke-width="1"/>
<line x1="579.7" y1="305.3" x2="634.4" y2="324.3" stroke="#0a5050" stroke-width="1"/>
<line x1="596.6" y1="348.0" x2="672.8" y2="332.0" stroke="#0a5050" stroke-width="1"/>
<line x1="569.7" y1="316.0" x2="592.6" y2="320.9" stroke="#0a5050" stroke-width="1"/>
<line x1="589.9" y1="350.6" x2="593.2" y2="316.5" stroke="#0a5050" stroke-width="1"/>
<line x1="566.4" y1="307.6" x2="655.1" y2="320.3" stroke="#0a5050" stroke-width="1"/>
<line x1="583.0" y1="321.0" x2="642.4" y2="345.8" stroke="#0a5050" stroke-width="1"/>
</g></svg>
<div class="t" style="left:17.18px;top:352.70px;transform:scaleX(1.2214);transform-origin:0 0;">Heat:</div>
<div class="btn dis" style="left:55px;top:348px;width:36px;height:23px;"></div>
<div class="t" style="left:63.66px;top:351.70px;transform:scaleX(1.1400);transform-origin:0 0;color:#a6a6a6;">Off</div>
<div class="combo" style="left:93px;top:348px;width:78px;height:23px"><div class="dv" style="left:54px;width:23px"></div><div class="arr" style="left:61.5px;top:9px"></div></div>
<div class="a" style="left:96px;top:348px;width:48.5px;height:23px;overflow:hidden"><div class="t" style="left:0.25px;top:3.70px;transform:scaleX(1.1474);transform-origin:0 0;">231.0 (off)</div></div>
<div class="btn dis" style="left:173px;top:348px;width:36px;height:23px;"></div>
<div class="t" style="left:179.46px;top:351.70px;transform:scaleX(1.1444);transform-origin:0 0;color:#a6a6a6;">Set</div>
<div class="t" style="left:23.54px;top:378.70px;transform:scaleX(1.1625);transform-origin:0 0;">Bed:</div>
<div class="btn dis" style="left:55px;top:375px;width:36px;height:22px;"></div>
<div class="t" style="left:63.66px;top:378.40px;transform:scaleX(1.1400);transform-origin:0 0;color:#a6a6a6;">Off</div>
<div class="combo" style="left:93px;top:375px;width:78px;height:22px"><div class="dv" style="left:54px;width:23px"></div><div class="arr" style="left:61.5px;top:9px"></div></div>
<div class="a" style="left:96px;top:375px;width:48.5px;height:22px;overflow:hidden"><div class="t" style="left:0.23px;top:3.40px;transform:scaleX(1.1684);transform-origin:0 0;">90.0 (user)</div></div>
<div class="btn dis" style="left:173px;top:375px;width:36px;height:22px;"></div>
<div class="t" style="left:179.46px;top:378.40px;transform:scaleX(1.1444);transform-origin:0 0;color:#a6a6a6;">Set</div>
<div class="btn pink" style="left:233px;top:348px;width:148px;height:25px;"></div>
<div class="t" style="left:267.37px;top:352.90px;transform:scaleX(1.1328);transform-origin:0 0;color:#a9a3a3;">Check temp</div>
<div class="a" style="left:235px;top:378px;width:12px;height:12px;border:1px solid #4b6a8f;border-radius:2px;background:linear-gradient(#a9c1dc,#6f8fb5)"></div>
<svg class="a" style="left:235px;top:378px;overflow:visible" width="12" height="12"><path d="M2,6 L5.2,9.2 L11.5,1.5" fill="none" stroke="#fff" stroke-width="2.2"/></svg>
<div class="t" style="left:253.00px;top:375.90px;transform:scaleX(1.0657);transform-origin:0 0;">Watch</div>
<div class="btn pink" style="left:3px;top:400px;width:113px;height:23px;"></div>
<div class="t" style="left:33.85px;top:403.80px;transform:scaleX(1.1500);transform-origin:0 0;color:#a9a3a3;">Extrude</div>
<div class="btn pink" style="left:118px;top:400px;width:113px;height:23px;"></div>
<div class="t" style="left:148.23px;top:403.80px;transform:scaleX(1.0717);transform-origin:0 0;color:#a9a3a3;">Reverse</div>
<div class="spin pk" style="left:3px;top:427px;width:68px;height:23px"><div class="dv" style="width:15px"><div class="up" style="left:3px;top:4.5px"></div><div class="dn" style="left:3px;top:13px"></div></div></div>
<div class="t" style="left:6.71px;top:431.00px;transform:scaleX(1.1895);transform-origin:0 0;">100</div>
<div class="t" style="left:76.23px;top:431.00px;transform:scaleX(1.1694);transform-origin:0 0;">mm @</div>
<div class="spin pk" style="left:127px;top:427px;width:68px;height:23px"><div class="dv" style="width:15px"><div class="up" style="left:3px;top:4.5px"></div><div class="dn" style="left:3px;top:13px"></div></div></div>
<div class="t" style="left:129.92px;top:431.00px;transform:scaleX(1.2833);transform-origin:0 0;">50</div>
<div class="t" style="left:200.43px;top:424.10px;transform:scaleX(1.2696);transform-origin:0 0;">mm/</div>
<div class="t" style="left:200.45px;top:438.90px;transform:scaleX(1.2500);transform-origin:0 0;">min</div>
<div class="bar" style="top:480px"><div class="k"></div><div class="tt" style="left:6px;top:0;border-top:5px solid #000"></div><div class="tt" style="left:6px;bottom:0;border-bottom:5px solid #000"></div></div>
<div class="bar" style="top:504px"><div class="k"></div><div class="tt" style="left:6px;top:0;border-top:5px solid #000"></div><div class="tt" style="left:6px;bottom:0;border-bottom:5px solid #000"></div></div>
<div class="t" style="left:20.39px;top:480.80px;font-weight:bold;font-size:10px;transform:scaleX(1.3125);transform-origin:0 0;color:#000;text-shadow:1px 1px 0 #fff;">Heater:</div>
<div class="t" style="left:20.48px;top:504.80px;font-weight:bold;font-size:10px;transform:scaleX(1.2200);transform-origin:0 0;color:#000;text-shadow:1px 1px 0 #fff;">Bed:</div>
<div class="t" style="left:122.20px;top:480.80px;font-weight:bold;font-size:10px;transform:scaleX(1.2423);transform-origin:0 0;color:#000;text-shadow:1px 1px 0 #fff;">T° 0/0</div>
<div class="t" style="left:122.20px;top:504.80px;font-weight:bold;font-size:10px;transform:scaleX(1.2423);transform-origin:0 0;color:#000;text-shadow:1px 1px 0 #fff;">T° 0/0</div>
<div class="btn" style="left:571px;top:552px;width:17px;height:16px;border-color:#888;border-radius:4px"></div>
<div class="a" style="left:575px;top:559px;width:9px;height:1px;background:#3a3aff"></div>
<div class="a" style="left:579px;top:555px;width:1px;height:9px;background:#3a3aff"></div>
<div class="a" style="left:777px;top:72px;width:5px;height:497px;background:#d9d9d9"></div>
<div class="a" style="left:777px;top:317px;width:4px;height:1px;background:#c2c2c2;box-shadow:0 3px 0 #c2c2c2,0 6px 0 #c2c2c2"></div>
<div class="a" style="left:782px;top:72px;width:277px;height:472px;background:#f6f6f6;border:1px solid #b9b9b9;border-right:none"></div>
<div class="t" style="left:782.71px;top:73.00px;transform:scaleX(1.0851);transform-origin:0 0;">Loaded /home/churchyard/RepRap/objekty/</div>
<div class="t" style="left:782.72px;top:88.00px;transform:scaleX(1.0817);transform-origin:0 0;">raspberry_pi case/RaspberryPicase-</div>
<div class="t" style="left:782.69px;top:103.00px;transform:scaleX(1.1122);transform-origin:0 0;">plate_export.gcode, 103135 lines</div>
<div class="t" style="left:783.80px;top:118.00px;transform:scaleX(1.1233);transform-origin:0 0;">4333.48095703 mm of filament used in</div>
<div class="t" style="left:783.80px;top:133.00px;transform:scaleX(1.1188);transform-origin:0 0;">this print</div>
<div class="t" style="left:783.80px;top:148.00px;transform:scaleX(1.1024);transform-origin:0 0;">The print goes:</div>
<div class="t" style="left:782.66px;top:163.00px;transform:scaleX(1.1352);transform-origin:0 0;">- from 25.51 mm to 154.51 mm in X and</div>
<div class="t" style="left:782.68px;top:178.00px;transform:scaleX(1.1170);transform-origin:0 0;">is 129.01 mm wide</div>
<div class="t" style="left:782.67px;top:193.00px;transform:scaleX(1.1308);transform-origin:0 0;">- from 53.32 mm to 146.62 mm in Y and</div>
<div class="t" style="left:782.67px;top:208.00px;transform:scaleX(1.1307);transform-origin:0 0;">is 93.30 mm deep</div>
<div class="t" style="left:782.66px;top:223.00px;transform:scaleX(1.1431);transform-origin:0 0;">- from 0.00 mm to 15.08 mm in Z and is</div>
<div class="t" style="left:782.65px;top:238.00px;transform:scaleX(1.1482);transform-origin:0 0;">15.08 mm high</div>
<div class="t" style="left:782.69px;top:253.00px;transform:scaleX(1.1147);transform-origin:0 0;">Estimated duration: 60 layers, 2:37:10</div>
<div class="a" style="left:783px;top:545px;width:232px;height:23px;border:1px solid #b4b4b4;border-radius:3px;background:#f6f6f6"></div>
<div class="btn" style="left:1017px;top:545px;width:41px;height:23px;"></div>
<div class="t" style="left:1020.45px;top:548.80px;transform:scaleX(1.1464);transform-origin:0 0;">Send</div>
<div class="a" style="left:2px;top:569px;width:1057px;height:23px;background:#dcdcdc;border-top:1px solid #c4c4c4"></div>
<div class="a" style="left:4px;top:571px;width:1053px;height:21px;border:1px solid #a8a8a8;border-right-color:#eee;border-bottom-color:#eee"></div>
<div class="t" style="left:6.11px;top:574.60px;transform:scaleX(1.0922);transform-origin:0 0;">Loaded /home/churchyard/RepRap/objekty/raspberry_pi case/RaspberryPicase-plate_export.gcode, 103135 lines</div>
<div class="a" style="left:1054px;top:581px;width:2px;height:2px;background:#b2b2b2;box-shadow:1px 1px 0 #f4f4f4"></div><div class="a" style="left:1051px;top:584px;width:2px;height:2px;background:#b2b2b2;box-shadow:1px 1px 0 #f4f4f4"></div><div class="a" style="left:1054px;top:584px;width:2px;height:2px;background:#b2b2b2;box-shadow:1px 1px 0 #f4f4f4"></div><div class="a" style="left:1048px;top:587px;width:2px;height:2px;background:#b2b2b2;box-shadow:1px 1px 0 #f4f4f4"></div><div class="a" style="left:1051px;top:587px;width:2px;height:2px;background:#b2b2b2;box-shadow:1px 1px 0 #f4f4f4"></div><div class="a" style="left:1054px;top:587px;width:2px;height:2px;background:#b2b2b2;box-shadow:1px 1px 0 #f4f4f4"></div><div class="a" style="left:1045px;top:590px;width:2px;height:2px;background:#b2b2b2;box-shadow:1px 1px 0 #f4f4f4"></div><div class="a" style="left:1048px;top:590px;width:2px;height:2px;background:#b2b2b2;box-shadow:1px 1px 0 #f4f4f4"></div><div class="a" style="left:1051px;top:590px;width:2px;height:2px;background:#b2b2b2;box-shadow:1px 1px 0 #f4f4f4"></div><div class="a" style="left:1054px;top:590px;width:2px;height:2px;background:#b2b2b2;box-shadow:1px 1px 0 #f4f4f4"></div>
</body></html>
